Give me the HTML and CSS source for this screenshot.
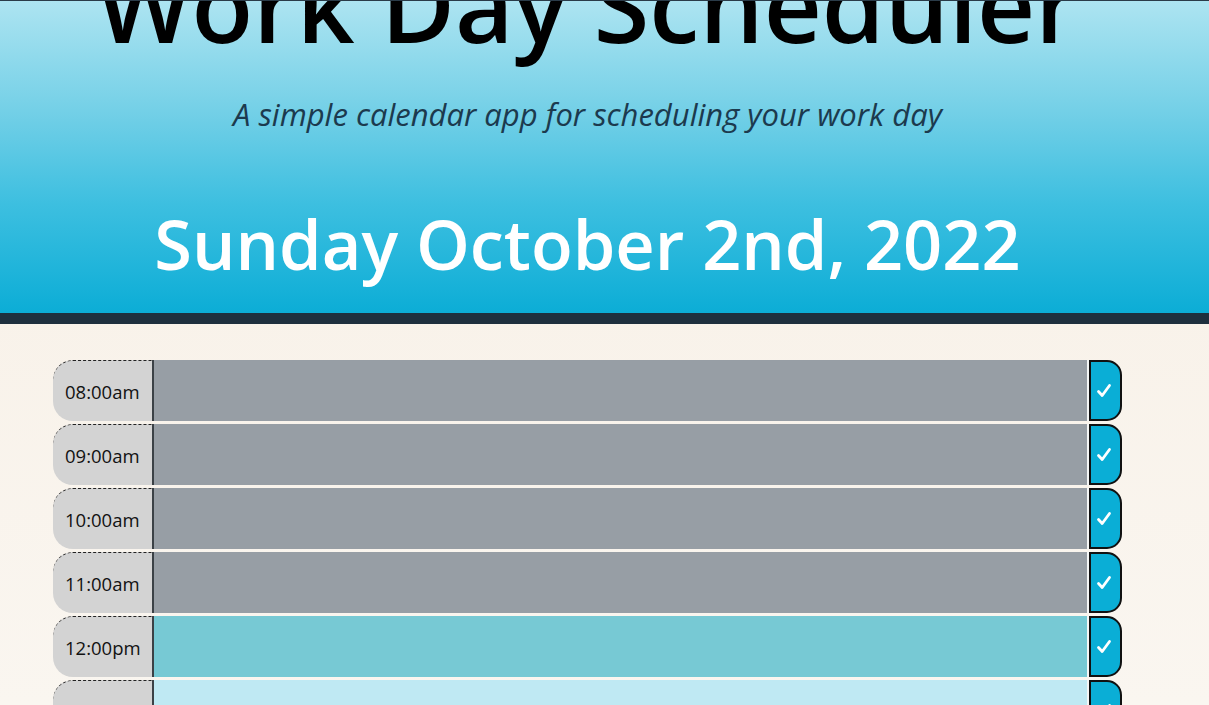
FILE: index.html
```html
<!DOCTYPE html>
<html lang="en">
<head>
<meta charset="utf-8">
<title>Work Day Scheduler</title>
<link rel="stylesheet" href="styles.css">
</head>
<body>
  <header class="jumbotron">
    <h1 class="title">Work Day Scheduler</h1>
    <p class="lead">A simple calendar app for scheduling your work day</p>
    <p class="today">Sunday October 2nd, 2022</p>
  </header>
  <main class="container">
    <div class="row">
      <div class="hour">08:00am</div>
      <textarea class="description past"></textarea>
      <button class="saveBtn" aria-label="save"><svg viewBox="0 0 16 16" width="16" height="16"><path d="M2.5 8.5 L6.2 12.5 L13.5 2.5" fill="none" stroke="#fff" stroke-width="2.8" stroke-linecap="round" stroke-linejoin="round"/></svg></button>
    </div>
    <div class="row">
      <div class="hour">09:00am</div>
      <textarea class="description past"></textarea>
      <button class="saveBtn" aria-label="save"><svg viewBox="0 0 16 16" width="16" height="16"><path d="M2.5 8.5 L6.2 12.5 L13.5 2.5" fill="none" stroke="#fff" stroke-width="2.8" stroke-linecap="round" stroke-linejoin="round"/></svg></button>
    </div>
    <div class="row">
      <div class="hour">10:00am</div>
      <textarea class="description past"></textarea>
      <button class="saveBtn" aria-label="save"><svg viewBox="0 0 16 16" width="16" height="16"><path d="M2.5 8.5 L6.2 12.5 L13.5 2.5" fill="none" stroke="#fff" stroke-width="2.8" stroke-linecap="round" stroke-linejoin="round"/></svg></button>
    </div>
    <div class="row">
      <div class="hour">11:00am</div>
      <textarea class="description past"></textarea>
      <button class="saveBtn" aria-label="save"><svg viewBox="0 0 16 16" width="16" height="16"><path d="M2.5 8.5 L6.2 12.5 L13.5 2.5" fill="none" stroke="#fff" stroke-width="2.8" stroke-linecap="round" stroke-linejoin="round"/></svg></button>
    </div>
    <div class="row">
      <div class="hour">12:00pm</div>
      <textarea class="description present"></textarea>
      <button class="saveBtn" aria-label="save"><svg viewBox="0 0 16 16" width="16" height="16"><path d="M2.5 8.5 L6.2 12.5 L13.5 2.5" fill="none" stroke="#fff" stroke-width="2.8" stroke-linecap="round" stroke-linejoin="round"/></svg></button>
    </div>
    <div class="row">
      <div class="hour">01:00pm</div>
      <textarea class="description future"></textarea>
      <button class="saveBtn" aria-label="save"><svg viewBox="0 0 16 16" width="16" height="16"><path d="M2.5 8.5 L6.2 12.5 L13.5 2.5" fill="none" stroke="#fff" stroke-width="2.8" stroke-linecap="round" stroke-linejoin="round"/></svg></button>
    </div>
  </main>
</body>
</html>
```
FILE: styles.css
```css
html, body {
  margin: 0;
  padding: 0;
  height: 100%;
  overflow: hidden;
}
body {
  font-family: "Open Sans", "DejaVu Sans", sans-serif;
  background: linear-gradient(180deg, #f7efe5 0%, #faf6f0 100%);
  border-top: 1px solid #2a3b48;
}
.jumbotron {
  text-align: center;
  height: 312px;
  padding-right: 34px;
  overflow: hidden;
  background: linear-gradient(180deg, #ade4f1 0%, #74d0e7 35%, #3dbfe0 65%, #0cadd6 100%);
  border-bottom: 11px solid #1e303e;
}
.title {
  margin: -57px 0 0;
  font-size: 101px;
  font-weight: 600;
  line-height: 1.2;
  color: #000;
}
.lead {
  margin: 28px 0 0;
  font-size: 31px;
  font-style: italic;
  font-weight: 500;
  color: #1c3a4e;
  line-height: 1.4;
}
.today {
  margin: 62px 0 0;
  font-size: 68.5px;
  font-weight: 600;
  color: #fff;
  line-height: 1.3;
}
.container {
  width: 1175px;
  box-sizing: border-box;
  padding: 36px 53px 0;
  display: flex;
  flex-direction: column;
  gap: 3px;
}
.row {
  display: flex;
  height: 61px;
}
.hour {
  width: 99px;
  flex: none;
  box-sizing: border-box;
  display: flex;
  align-items: center;
  padding-left: 12px;
  font-size: 18.5px;
  color: #111;
  background: #d3d3d3;
  border-top: 1px dashed #222;
  border-radius: 20px 0 0 20px;
}
.description {
  flex: 1;
  margin: 0;
  border: none;
  border-left: 2px solid #3b4146;
  border-right: 2px solid #f4f6f6;
  resize: none;
  padding: 10px;
  font-family: inherit;
}
.past { background: #979ea5; }
.present { background: #77c9d4; }
.future { background: #bfe9f3; }
.saveBtn {
  width: 33px;
  flex: none;
  margin: 0;
  padding: 0 3px 0 0;
  box-sizing: border-box;
  background: #0aaed6;
  border: 2px solid #111;
  border-radius: 0 15px 15px 0;
  display: flex;
  align-items: center;
  justify-content: center;
}
```
